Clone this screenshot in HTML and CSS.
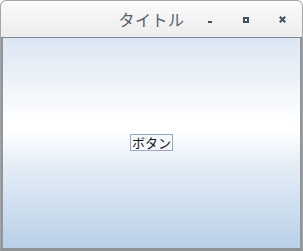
FILE: index.html
```html
<!DOCTYPE html>
<html lang="ja">
<head>
  <meta charset="UTF-8">
  <title>タイトル</title>
  <link rel="stylesheet" href="styles.css">
</head>
<body>
  <div class="window">
    <div class="titlebar">
      <span></span>
      <span class="title">タイトル</span>
      <div class="controls">
        <span class="ctl"><span class="min"></span></span>
        <span class="ctl"><span class="max"></span></span>
        <span class="ctl">
          <svg width="7" height="7" viewBox="0 0 7 7"><path d="M0.8 0.8 L6.2 6.2 M6.2 0.8 L0.8 6.2" stroke="#3d5260" stroke-width="2"/></svg>
        </span>
      </div>
    </div>
    <div class="content">
      <button class="button">ボタン</button>
    </div>
  </div>
</body>
</html>
```
FILE: styles.css
```css
html, body {
  margin: 0;
  padding: 0;
  width: 303px;
  height: 251px;
  overflow: hidden;
  background: #ffffff;
}

.window {
  box-sizing: border-box;
  width: 303px;
  height: 251px;
  display: flex;
  flex-direction: column;
  border: 1px solid #a6a6a6;
  border-bottom: 3px solid #8e9196;
  border-radius: 6px 6px 0 0;
  overflow: hidden;
  background: #8e9196;
  font-family: "Noto Sans CJK JP", "Noto Sans", sans-serif;
}

.titlebar {
  height: 36px;
  display: grid;
  grid-template-columns: 1fr auto 1fr;
  align-items: center;
  background: linear-gradient(#fbfbfb, #ececec);
  border-bottom: 1px solid #7d8a97;
}

.title {
  font-size: 16px;
  color: #56616a;
  letter-spacing: 0.5px;
  margin-top: -1px;
}

.controls {
  display: flex;
  justify-content: flex-end;
  padding-right: 2px;
}

.ctl {
  width: 36px;
  height: 36px;
  display: flex;
  align-items: center;
  justify-content: center;
}

.min {
  width: 4px;
  height: 2px;
  margin-top: 5px;
  background: #3d5260;
}

.max {
  box-sizing: border-box;
  width: 6px;
  height: 6px;
  margin-top: 1px;
  border: 2px solid #3d5260;
}

.content {
  flex: 1;
  display: flex;
  align-items: center;
  justify-content: center;
  margin: 0 1px;
  border-left: 1px solid #8e99a6;
  border-right: 1px solid #8e99a6;
  background: linear-gradient(#dbe6f3 0%, #ffffff 40%, #ffffff 44%, #e3ecf6 62%, #b9d0e8 100%);
}

.button {
  font-family: "Noto Sans CJK JP", sans-serif;
  font-size: 13px;
  line-height: 15px;
  padding: 0 1px;
  color: #1a1a1a;
  background: #f4f7fb;
  border: 1px solid #9aa8b8;
  border-radius: 0;
  margin-top: -1px;
}
```
